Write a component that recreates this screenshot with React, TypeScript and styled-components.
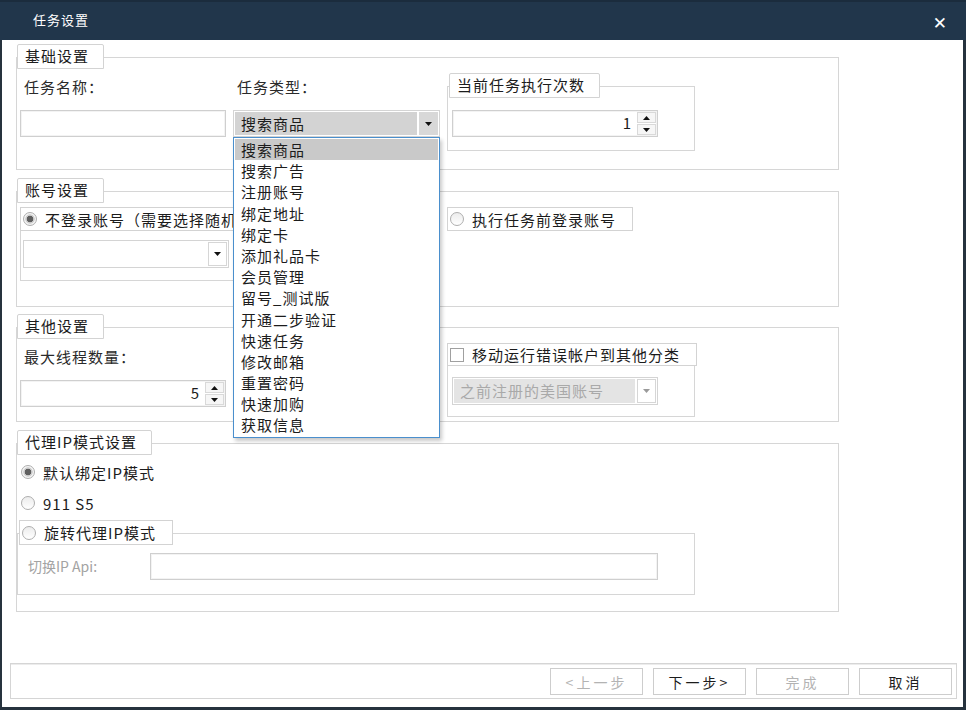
import React from "react";
import styled, { createGlobalStyle } from "styled-components";

const GlobalStyle = createGlobalStyle`
  html, body {
    margin: 0;
    padding: 0;
  }
  body {
    width: 966px;
    height: 710px;
    overflow: hidden;
    background: #fff;
    font-family: "Noto Sans CJK SC", "Noto Sans", sans-serif;
    color: #1c1c1c;
  }
`;

const Window = styled.div`
  width: 966px;
  height: 710px;
  display: flex;
  flex-direction: column;
  background: #26323e;
`;

const TitleBar = styled.div`
  height: 40px;
  flex: none;
  display: flex;
  align-items: center;
  justify-content: space-between;
  box-sizing: border-box;
  padding: 0 19px 3px 33px;
  background: #21364b;
  border-top: 2px solid #1b2c3d;
  color: #fff;
`;

const Title = styled.span`
  font-size: 13px;
  letter-spacing: 1px;
`;

const Close = styled.span`
  font-family: "DejaVu Sans", sans-serif;
  font-size: 17px;
  font-weight: bold;
  margin-top: 6px;
`;

const Body = styled.div`
  flex: 1;
  display: flex;
  flex-direction: column;
  margin: 0 3px 3px 2px;
  background: #fff;
`;

const Content = styled.div`
  flex: 1;
  padding: 4px 0 0 14px;
  font-size: 15px;
  letter-spacing: 1px;
`;

const Group = styled.div<{ $gap?: number }>`
  display: flex;
  flex-direction: column;
  align-items: flex-start;
  width: 823px;
  margin-bottom: ${(p) => p.$gap ?? 8}px;
`;

const Legend = styled.div`
  position: relative;
  z-index: 1;
  height: 25px;
  box-sizing: border-box;
  margin: 0 0 -12px 1px;
  padding: 0 14px 0 7px;
  border: 1px solid #d3d3d3;
  border-radius: 2px 2px 0 0;
  background: #fff;
  line-height: 22px;
  white-space: nowrap;
`;

const Frame = styled.div<{ $h: number; $w?: number }>`
  width: ${(p) => (p.$w ? `${p.$w}px` : "100%")};
  height: ${(p) => p.$h}px;
  box-sizing: border-box;
  border: 1px solid #d6d6d6;
`;

const Row = styled.div<{ $top?: number; $left?: number }>`
  display: flex;
  align-items: flex-start;
  gap: 7px;
  padding: ${(p) => p.$top ?? 0}px 0 0 ${(p) => p.$left ?? 3}px;
`;

const Column = styled.div<{ $w: number; $top?: number }>`
  display: flex;
  flex-direction: column;
  align-items: flex-start;
  width: ${(p) => p.$w}px;
  padding-top: ${(p) => p.$top ?? 0}px;
`;

const FieldLabel = styled.div<{ $after?: number }>`
  height: 18px;
  line-height: 18px;
  margin: 0 0 ${(p) => p.$after ?? 14}px 4px;
  color: #2a2a2a;
`;

const SubGroup = styled.div<{ $top?: number; $left?: number }>`
  display: flex;
  flex-direction: column;
  align-items: flex-start;
  margin-top: ${(p) => p.$top ?? 0}px;
  margin-left: ${(p) => p.$left ?? 0}px;
`;

const SubLegend = styled(Legend)`
  margin: 0 0 -12px 2px;
`;

const SubFrame = styled.div<{ $w: number; $h: number; $top: number; $left: number; $under?: boolean }>`
  width: ${(p) => p.$w}px;
  height: ${(p) => p.$h}px;
  box-sizing: border-box;
  margin-top: ${(p) => (p.$under ? -1 : 0)}px;
  border: 1px solid #d6d6d6;
  padding: ${(p) => p.$top}px 0 0 ${(p) => p.$left}px;
`;

const TextInput = styled.div<{ $w: number }>`
  width: ${(p) => p.$w}px;
  height: 27px;
  box-sizing: border-box;
  border: 1px solid #cfcfcf;
  box-shadow: inset 0 0 0 1px #f3f3f3;
  background: #fff;
`;

const SpinBox = styled.div<{ $w: number }>`
  display: flex;
  width: ${(p) => p.$w}px;
  height: 27px;
  box-sizing: border-box;
  border: 1px solid #cfcfcf;
  box-shadow: inset 0 0 0 1px #f3f3f3;
  background: #fff;
`;

const SpinValue = styled.div`
  flex: 1;
  text-align: right;
  padding-right: 6px;
  line-height: 24px;
  font-size: 15px;
  letter-spacing: 0;
`;

const SpinButtons = styled.div`
  display: flex;
  flex-direction: column;
  gap: 1px;
  width: 20px;
  padding: 1px 1px 1px 0;
  box-sizing: border-box;
`;

const SpinButton = styled.div`
  flex: 1;
  display: flex;
  align-items: center;
  justify-content: center;
  border: 1px solid #d9d9d9;
  background: #f6f6f6;
`;

type Tone = "selected" | "plain" | "disabled";

const Combo = styled.div<{ $w: number; $h: number }>`
  position: relative;
  display: flex;
  gap: 2px;
  width: ${(p) => p.$w}px;
  height: ${(p) => p.$h}px;
  box-sizing: border-box;
  padding: 1px;
  border: 1px solid #d4d4d4;
  background: #fff;
`;

const ComboText = styled.div<{ $tone: Tone }>`
  flex: 1;
  padding-left: 6px;
  line-height: 23px;
  white-space: nowrap;
  overflow: hidden;
  background: ${(p) =>
    p.$tone === "selected" ? "#d3d3d3" : p.$tone === "disabled" ? "#e4e4e4" : "#fff"};
  color: ${(p) => (p.$tone === "disabled" ? "#a9a9a9" : "#1c1c1c")};
`;

const ComboButton = styled.div<{ $tone: Tone }>`
  width: 19px;
  display: flex;
  align-items: center;
  justify-content: center;
  box-sizing: border-box;
  background: ${(p) => (p.$tone === "selected" ? "#d8d8d8" : "#fff")};
  border: 1px solid ${(p) => (p.$tone === "selected" ? "#d8d8d8" : "#d6d6d6")};
`;

const DropList = styled.ul`
  position: absolute;
  top: 26px;
  left: -1px;
  z-index: 10;
  width: 207px;
  margin: 0;
  padding: 1px;
  box-sizing: border-box;
  list-style: none;
  background: #fff;
  border: 1px solid #4a8fcd;
  box-shadow: 2px 3px 4px rgba(0, 0, 0, 0.22);
`;

const DropItem = styled.li<{ $active?: boolean }>`
  height: 21.2px;
  line-height: 21px;
  padding-left: 6px;
  white-space: nowrap;
  background: ${(p) => (p.$active ? "#c9c9c9" : "transparent")};
`;

const OptionFrame = styled.div<{ $h?: number; $clipAt?: number; $ml?: number; $mb?: number }>`
  position: relative;
  z-index: 1;
  display: flex;
  align-items: center;
  gap: 8px;
  height: ${(p) => p.$h ?? 24}px;
  max-width: ${(p) => (p.$clipAt ? `${p.$clipAt}px` : "none")};
  box-sizing: border-box;
  margin: 0 0 ${(p) => p.$mb ?? 0}px ${(p) => p.$ml ?? 0}px;
  padding: 0 ${(p) => (p.$clipAt ? 0 : 16)}px 0 2px;
  border: 1px solid #d3d3d3;
  background: #fff;
  white-space: nowrap;
  overflow: hidden;
`;

const OptionRow = styled.div<{ $top: number }>`
  display: flex;
  align-items: center;
  gap: 8px;
  height: 24px;
  margin-top: ${(p) => p.$top}px;
  padding-left: 4px;
  white-space: nowrap;
`;

const RadioDot = styled.span<{ $on?: boolean }>`
  flex: none;
  width: 14px;
  height: 14px;
  box-sizing: border-box;
  border-radius: 50%;
  border: 1px solid #aeaeae;
  background: ${(p) =>
    p.$on
      ? "radial-gradient(circle, #5f5f5f 0 3px, #cfcfcf 3.6px 4.4px, #f4f4f4 5px)"
      : "linear-gradient(#ececec, #fff)"};
`;

const CheckBox = styled.span`
  flex: none;
  width: 14px;
  height: 14px;
  box-sizing: border-box;
  border: 1px solid #a0a0a0;
  background: #fff;
`;

const MutedLabel = styled.div`
  width: 122px;
  font-size: 14px;
  letter-spacing: 0;
  line-height: 27px;
  color: #a3a3a3;
`;

const Footer = styled.div`
  display: flex;
  justify-content: flex-end;
  gap: 10px;
  height: 36px;
  box-sizing: border-box;
  margin: 0 6px 8px 8px;
  padding: 4px 4px 0 0;
  border: 1px solid #d5d5d5;
  box-shadow: inset 0 6px 0 -5px #ececec;
`;

const Button = styled.div<{ $disabled?: boolean }>`
  width: 93px;
  height: 27px;
  box-sizing: border-box;
  display: flex;
  align-items: center;
  justify-content: center;
  border: 1px solid #cdcdcd;
  background: #fff;
  font-size: 14px;
  letter-spacing: 3px;
  color: ${(p) => (p.$disabled ? "#b3b3b3" : "#1c1c1c")};
`;

function Tri({ up, color = "#111" }: { up?: boolean; color?: string }) {
  return (
    <svg width="7" height="4" viewBox="0 0 7 4">
      <path d={up ? "M0 4H7L3.5 0Z" : "M0 0H7L3.5 4Z"} fill={color} />
    </svg>
  );
}

function Spinner({ width, value }: { width: number; value: string }) {
  return (
    <SpinBox $w={width}>
      <SpinValue>{value}</SpinValue>
      <SpinButtons>
        <SpinButton>
          <Tri up />
        </SpinButton>
        <SpinButton>
          <Tri />
        </SpinButton>
      </SpinButtons>
    </SpinBox>
  );
}

const taskTypes = [
  "搜索商品",
  "搜索广告",
  "注册账号",
  "绑定地址",
  "绑定卡",
  "添加礼品卡",
  "会员管理",
  "留号_测试版",
  "开通二步验证",
  "快速任务",
  "修改邮箱",
  "重置密码",
  "快速加购",
  "获取信息",
];

export default function App() {
  return (
    <>
      <GlobalStyle />
      <Window>
        <TitleBar>
          <Title>任务设置</Title>
          <Close>✕</Close>
        </TitleBar>
        <Body>
          <Content>
            <Group>
              <Legend>基础设置</Legend>
              <Frame $h={113}>
                <Row>
                  <Column $w={206} $top={20}>
                    <FieldLabel>任务名称：</FieldLabel>
                    <TextInput $w={206} />
                  </Column>
                  <Column $w={207} $top={20}>
                    <FieldLabel>任务类型：</FieldLabel>
                    <Combo $w={207} $h={27}>
                      <ComboText $tone="selected">搜索商品</ComboText>
                      <ComboButton $tone="selected">
                        <Tri />
                      </ComboButton>
                      <DropList>
                        {taskTypes.map((t, i) => (
                          <DropItem key={t} $active={i === 0}>
                            {t}
                          </DropItem>
                        ))}
                      </DropList>
                    </Combo>
                  </Column>
                  <SubGroup $top={15}>
                    <SubLegend>当前任务执行次数</SubLegend>
                    <SubFrame $w={248} $h={65} $top={23} $left={4}>
                      <Spinner width={206} value="1" />
                    </SubFrame>
                  </SubGroup>
                </Row>
              </Frame>
            </Group>

            <Group $gap={7}>
              <Legend>账号设置</Legend>
              <Frame $h={116}>
                <Row $top={15}>
                  <SubGroup>
                    <OptionFrame $clipAt={214}>
                      <RadioDot $on />
                      不登录账号（需要选择随机账号分类）
                    </OptionFrame>
                    <SubFrame $w={420} $h={51} $top={9} $left={2} $under>
                      <Combo $w={206} $h={28}>
                        <ComboText $tone="plain" />
                        <ComboButton $tone="plain">
                          <Tri />
                        </ComboButton>
                      </Combo>
                    </SubFrame>
                  </SubGroup>
                  <OptionFrame>
                    <RadioDot />
                    执行任务前登录账号
                  </OptionFrame>
                </Row>
              </Frame>
            </Group>

            <Group>
              <Legend>其他设置</Legend>
              <Frame $h={95}>
                <Row>
                  <Column $w={420} $top={20}>
                    <FieldLabel>最大线程数量：</FieldLabel>
                    <Spinner width={206} value="5" />
                  </Column>
                  <SubGroup $top={15}>
                    <OptionFrame $h={23}>
                      <CheckBox />
                      移动运行错误帐户到其他分类
                    </OptionFrame>
                    <SubFrame $w={248} $h={52} $top={11} $left={4} $under>
                      <Combo $w={206} $h={28}>
                        <ComboText $tone="disabled">之前注册的美国账号</ComboText>
                        <ComboButton $tone="disabled">
                          <Tri color="#9a9a9a" />
                        </ComboButton>
                      </Combo>
                    </SubFrame>
                  </SubGroup>
                </Row>
              </Frame>
            </Group>

            <Group>
              <Legend>代理IP模式设置</Legend>
              <Frame $h={169}>
                <Column $w={821}>
                  <OptionRow $top={16}>
                    <RadioDot $on />
                    默认绑定IP模式
                  </OptionRow>
                  <OptionRow $top={7}>
                    <RadioDot />
                    911 S5
                  </OptionRow>
                  <SubGroup $top={5}>
                    <OptionFrame $h={25} $ml={2} $mb={-12}>
                      <RadioDot />
                      旋转代理IP模式
                    </OptionFrame>
                    <SubFrame $w={678} $h={62} $top={19} $left={10}>
                      <Row $left={0} style={{ gap: 0 }}>
                        <MutedLabel>切换IP Api:</MutedLabel>
                        <TextInput $w={508} />
                      </Row>
                    </SubFrame>
                  </SubGroup>
                </Column>
              </Frame>
            </Group>
          </Content>

          <Footer>
            <Button $disabled>&lt;上一步</Button>
            <Button>下一步&gt;</Button>
            <Button $disabled>完成</Button>
            <Button>取消</Button>
          </Footer>
        </Body>
      </Window>
    </>
  );
}
